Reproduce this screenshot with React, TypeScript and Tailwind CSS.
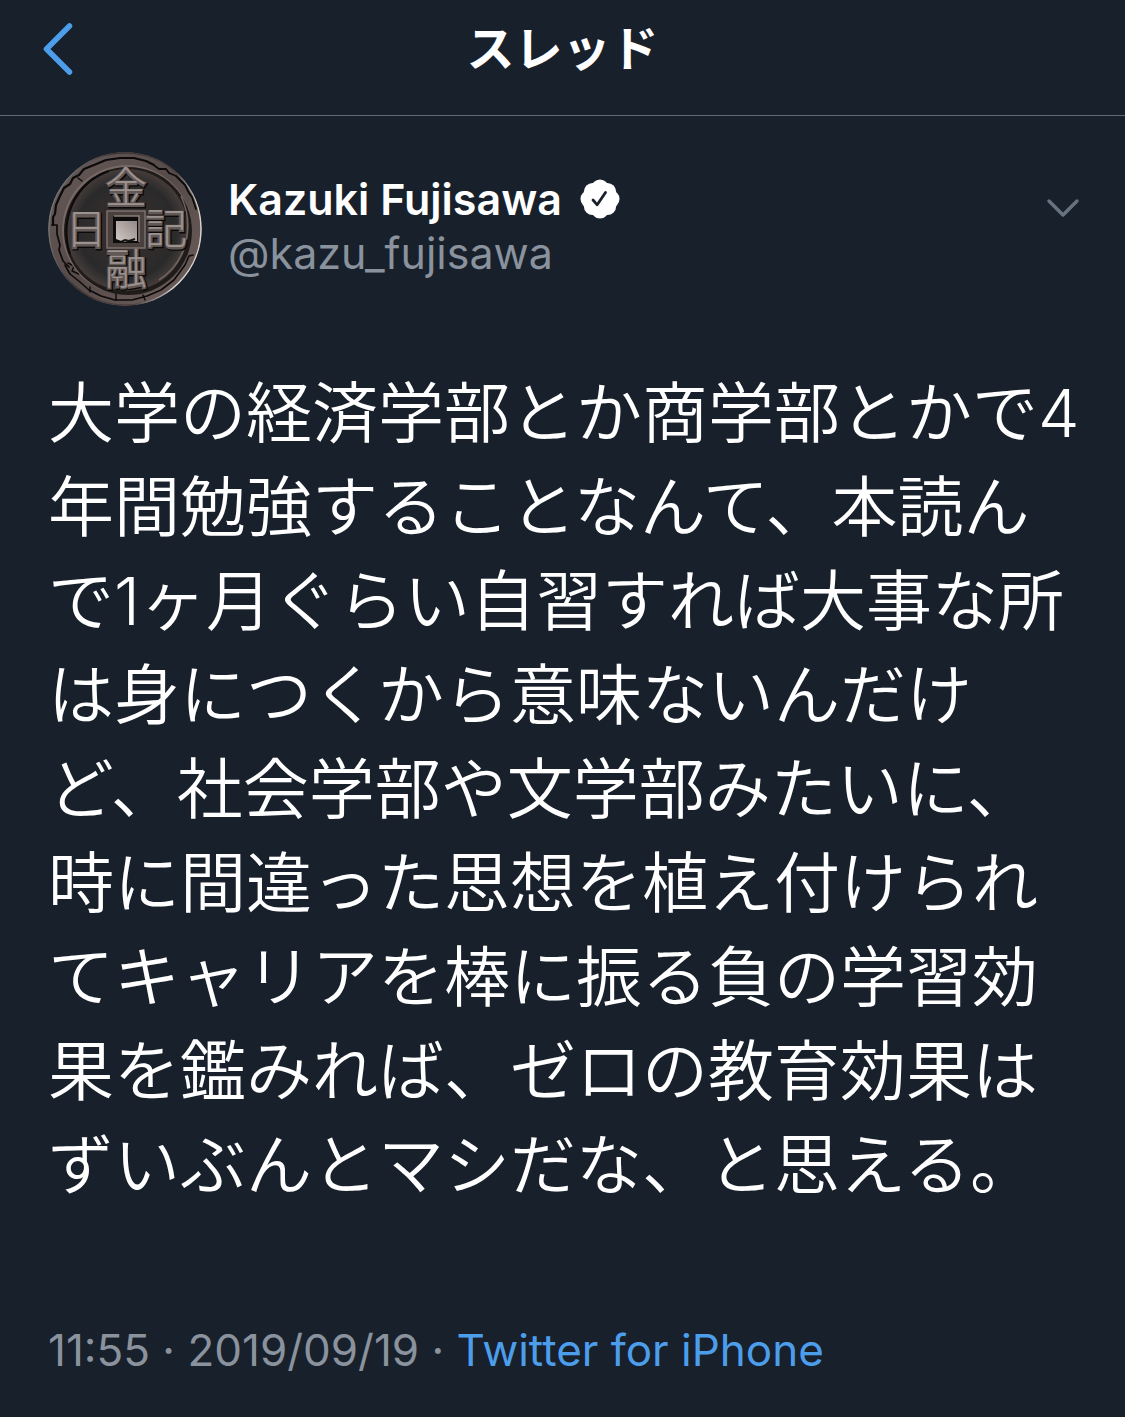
const latin = "font-['Inter','Noto_Sans_CJK_JP',sans-serif]";

const glyphs = [
  { char: "金", x: 78, y: 52, size: 42 },
  { char: "日", x: 38, y: 93, size: 41 },
  { char: "記", x: 118, y: 93, size: 42 },
  { char: "融", x: 78, y: 133, size: 42 },
];

function CoinAvatar() {
  return (
    <svg viewBox="0 0 154 154" className="size-[154px] shrink-0 rounded-full" role="img" aria-label="Kazuki Fujisawa">
      <defs>
        <linearGradient id="rim" x1="0" y1="0" x2="1" y2="1">
          <stop offset="0" stopColor="#665a58" />
          <stop offset="0.5" stopColor="#564b49" />
          <stop offset="1" stopColor="#6f5f5c" />
        </linearGradient>
        <radialGradient id="face">
          <stop offset="0" stopColor="#3b3432" />
          <stop offset="0.55" stopColor="#302c2b" />
          <stop offset="0.8" stopColor="#2a2a2b" />
          <stop offset="1" stopColor="#453c3a" />
        </radialGradient>
        <linearGradient id="hole" x1="0" y1="1" x2="1" y2="0">
          <stop offset="0" stopColor="#d2cac6" />
          <stop offset="1" stopColor="#938a87" />
        </linearGradient>
        <linearGradient id="edge" x1="0" y1="0" x2="1" y2="0.3">
          <stop offset="0" stopColor="#8d9091" />
          <stop offset="0.4" stopColor="#3a3332" />
          <stop offset="0.8" stopColor="#4c4341" />
          <stop offset="1" stopColor="#d4d2d0" />
        </linearGradient>
      </defs>
      <circle cx="77" cy="77" r="77" fill="url(#rim)" />
      <circle cx="77" cy="77" r="76" fill="none" stroke="url(#edge)" strokeWidth="1.5" />
      <g fill="none" stroke="#0c0a0a" strokeLinecap="round" strokeLinejoin="round">
        <path d="M5 73v-8l2-3 1-9 4-9 4-8 6-4 3-6 6-3 5-6 10-4 12-5 14-2 14 0 12 3 8 4" strokeWidth="2.2" />
        <path d="M4 73h5v9l3 11-1 5 4 11 6 6" strokeWidth="1.7" />
        <path d="M107 14l4 3 7 0 3 4 7 3 4 4 5 5 4 8 3 4 4 12" strokeWidth="1.8" />
        <path d="M17 113l5 9 10 8 9 8 12 6 14 4 17 0 15-4 14-6 13-10 11-15 4-9 4-1" strokeWidth="1.6" />
        <path d="M42 135v5M68 142v6M95 143l2 5M20 111l6 3-2 5 7 3M133 110l6-8M30 26l4 3" strokeWidth="1.4" />
      </g>
      <circle cx="79" cy="78" r="65" fill="#766864" />
      <circle cx="80" cy="79" r="64" fill="#1f1b1b" />
      <circle cx="79" cy="78" r="61" fill="url(#face)" />
      <path d="M22 102C11 67 27 31 61 19" fill="none" stroke="#0c0a0a" strokeWidth="2" />
      <path d="M133 44c14 30 6 66-22 84" fill="none" stroke="#6e625f" strokeWidth="1.6" />
      <g className="font-['Noto_Sans_CJK_JP',sans-serif] font-medium" textAnchor="middle">
        {glyphs.map((g) => (
          <g key={g.char} fontSize={g.size}>
            <text x={g.x + 1} y={g.y + 1} fill="#0b0909" stroke="#0b0909" strokeWidth="2">
              {g.char}
            </text>
            <text x={g.x} y={g.y} fill="#625856" stroke="#625856" strokeWidth="1.2">
              {g.char}
            </text>
            <text x={g.x} y={g.y - 1} fill="#9c9290" className="font-light">
              {g.char}
            </text>
          </g>
        ))}
      </g>
      <rect x="59" y="59" width="38" height="37" fill="#4a403e" stroke="#7d706d" strokeWidth="1.5" />
      <rect x="65" y="64" width="26" height="27" fill="#0d0b0b" />
      <path d="M66 64h25v26" fill="none" stroke="#8a7d79" strokeWidth="1.5" />
      <path d="M68 69h21v20h-9l-4 1-8-3z" fill="url(#hole)" />
      <path d="M73 90l4-2 4 1 6-2" fill="none" stroke="#171313" strokeWidth="2" />
    </svg>
  );
}

function VerifiedBadge() {
  return (
    <svg viewBox="0 0 40 40" className="size-10 shrink-0" role="img" aria-label="Verified">
      <g fill="#fff">
        <circle cx="20" cy="20" r="15" />
        <circle cx="20" cy="9.2" r="8.7" />
        <circle cx="27.4" cy="12.6" r="8.7" />
        <circle cx="30.8" cy="20" r="8.7" />
        <circle cx="27.4" cy="27.4" r="8.7" />
        <circle cx="20" cy="30.8" r="8.7" />
        <circle cx="12.6" cy="27.4" r="8.7" />
        <circle cx="9.2" cy="20" r="8.7" />
        <circle cx="12.6" cy="12.6" r="8.7" />
      </g>
      <path d="M13 21l4.200 4.800 8.300-12.300" fill="none" stroke="#18202b" strokeWidth="2.800" strokeLinecap="round" strokeLinejoin="round" />
    </svg>
  );
}

export default function App() {
  return (
    <div lang="ja" className={`min-h-screen bg-[#18202b] text-white ${latin}`}>
      <header className="grid h-[116px] grid-cols-[1fr_auto_1fr] items-start border-b border-[#646a73] px-10 pt-4">
        <button type="button" aria-label="戻る" className="mt-1 justify-self-start">
          <svg viewBox="0 0 36 58" className="h-[58px] w-9" fill="none" stroke="#4c9eeb" strokeWidth="5.500" strokeLinecap="round" strokeLinejoin="round">
            <path d="M29.500 6L6.500 29l23 23" />
          </svg>
        </button>
        <h1 className="font-['Noto_Sans_CJK_JP',sans-serif] text-[48px] leading-[58px] font-bold">スレッド</h1>
      </header>

      <main>
        <article className="pr-10 pl-12">
          <div className="flex items-start pt-9">
            <CoinAvatar />
            <div className="ml-[26px] min-w-0 flex-1 pt-5">
              <div className="flex items-center gap-[18px]">
                <h2 className="text-[43px] leading-[54px] font-semibold">Kazuki Fujisawa</h2>
                <VerifiedBadge />
              </div>
              <p className="text-[43px] leading-[54px] text-[#89929d]">@kazu_fujisawa</p>
            </div>
            <button type="button" aria-label="メニュー" className="mt-11 mr-1">
              <svg viewBox="0 0 36 24" className="h-6 w-9" fill="none" stroke="#66727f" strokeWidth="3.500" strokeLinecap="round" strokeLinejoin="round">
                <path d="M4 5l14 14L32 5" />
              </svg>
            </button>
          </div>

          <p className="mt-[60px] font-['Inter','Noto_Sans_CJK_JP_DemiLight','Noto_Sans_CJK_JP',sans-serif] text-[66px] leading-[94px] font-[350]">
            大学の経済学部とか商学部とかで4年間勉強することなんて、本読んで1ヶ月ぐらい自習すれば大事な所は身につくから意味ないんだけど、社会学部や文学部みたいに、時に間違った思想を植え付けられてキャリアを棒に振る負の学習効果を鑑みれば、ゼロの教育効果はずいぶんとマシだな、と思える。
          </p>

          <p className="mt-[111px] pb-9 text-[44px] leading-[54px] text-[#89929d]">
            <time dateTime="2019-09-19T11:55">11:55 · 2019/09/19</time> ·{" "}
            <a href="#source" className="text-[#4c9eeb]">
              Twitter for iPhone
            </a>
          </p>
        </article>
      </main>
    </div>
  );
}
